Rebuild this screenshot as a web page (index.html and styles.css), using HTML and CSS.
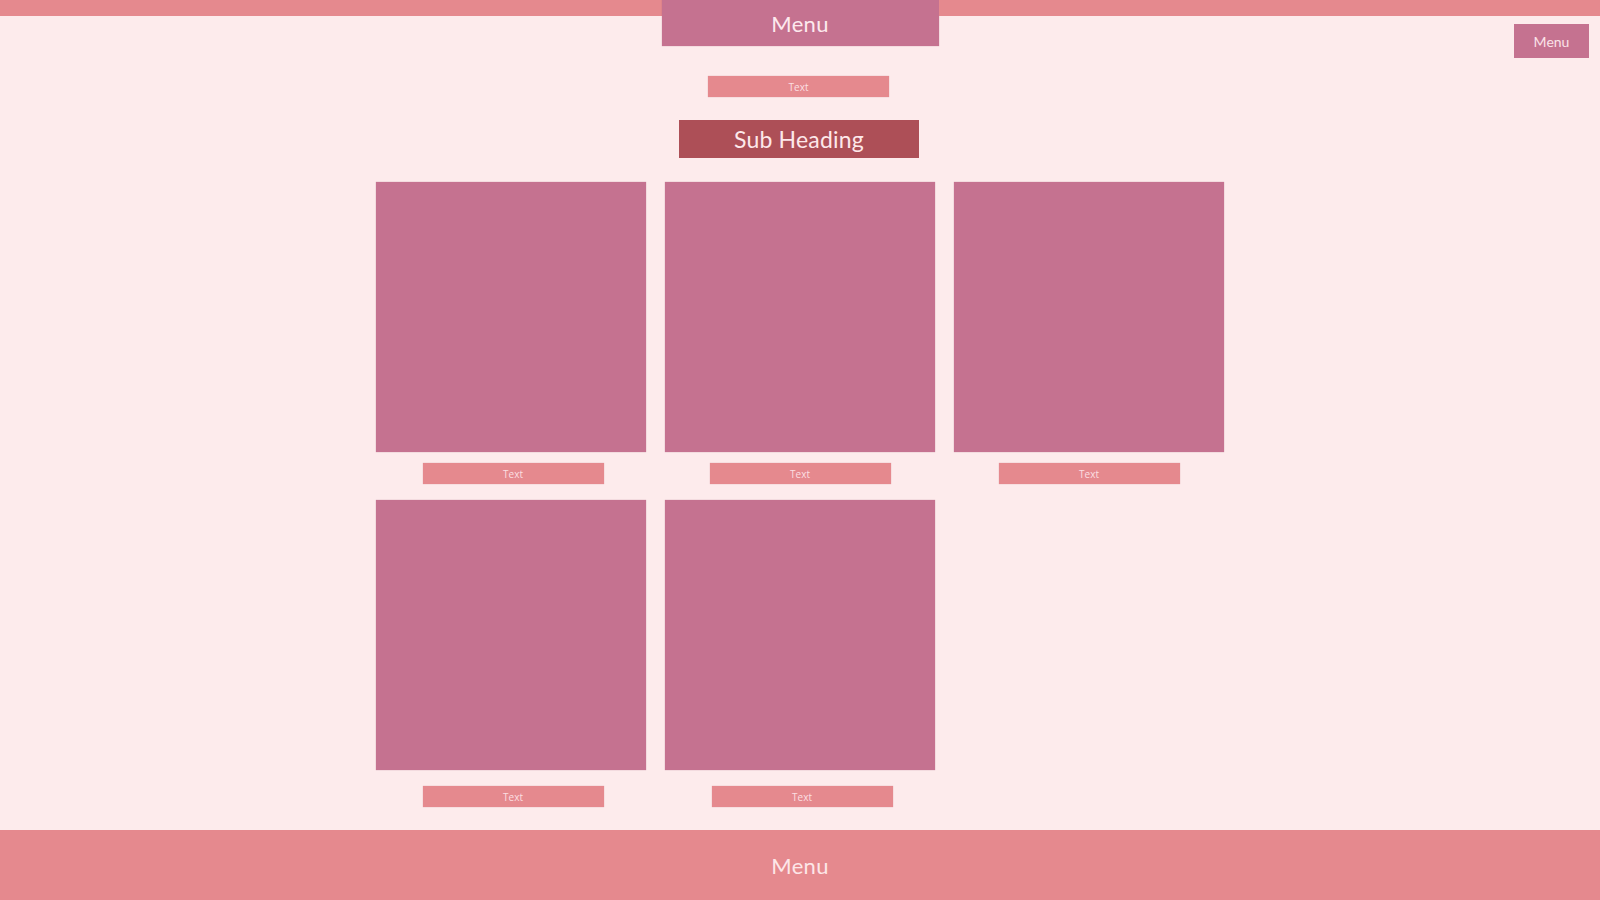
FILE: index.html
```html
<!DOCTYPE html>
<html>
<head>
<meta charset="utf-8">
<link rel="stylesheet" href="styles.css">
</head>
<body>
<header class="header">
  <div class="side">
    <div class="strip"></div>
  </div>
  <div class="menu-main">Menu</div>
  <div class="side side-right">
    <div class="strip"></div>
    <div class="menu-small">Menu</div>
  </div>
</header>
<main class="main">
  <div class="label label-top">Text</div>
  <h2 class="subheading">Sub Heading</h2>
  <div class="grid">
    <div class="item"><div class="card"></div><div class="label label-r1 shift">Text</div></div>
    <div class="item"><div class="card"></div><div class="label label-r1">Text</div></div>
    <div class="item"><div class="card"></div><div class="label label-r1">Text</div></div>
    <div class="item"><div class="card"></div><div class="label label-r2 shift">Text</div></div>
    <div class="item"><div class="card"></div><div class="label label-r2 shift-s">Text</div></div>
  </div>
</main>
<footer class="footer">Menu</footer>
</body>
</html>
```
FILE: styles.css
```css
* { box-sizing: border-box; }
html, body {
  margin: 0;
  padding: 0;
}
body {
  background: #fdebec;
  font-family: "Open Sans", "Noto Sans", sans-serif;
  color: #fde6e8;
  width: 1600px;
  height: 900px;
  display: flex;
  flex-direction: column;
  overflow: hidden;
}
.header {
  display: grid;
  grid-template-columns: 1fr 277px 1fr;
  height: 46px;
}
.side {
  display: flex;
  flex-direction: column;
}
.strip {
  height: 16px;
  background: #e5898e;
  align-self: stretch;
}
.side-right {
  align-items: flex-end;
}
.menu-small {
  margin-top: 8px;
  margin-right: 11px;
  width: 75px;
  height: 34px;
  background: #c57290;
  display: flex;
  align-items: center;
  justify-content: center;
  font-family: "Lato", "Noto Sans", sans-serif;
  font-size: 14px;
  color: #fbe2e8;
}
.menu-main {
  background: #c57290;
  height: 46px;
  display: flex;
  align-items: center;
  justify-content: center;
  font-family: "Lato", "Noto Sans", sans-serif;
  font-size: 22px;
  letter-spacing: 0.3px;
  color: #fde9ee;
  box-shadow: 0 0 1px rgba(160, 80, 110, 0.5);
}
.main {
  display: flex;
  flex-direction: column;
  align-items: center;
  flex: 1;
}
.label {
  width: 181px;
  height: 21px;
  background: #e5898e;
  display: flex;
  align-items: center;
  justify-content: center;
  font-size: 10px;
  color: #fcdfe2;
  box-shadow: 0 0 1px rgba(200, 110, 120, 0.6);
}
.label-top {
  margin-top: 30px;
  margin-left: -3px;
}
.subheading {
  margin: 23px 0 0 -2px;
  width: 240px;
  height: 38px;
  background: #ad4f57;
  display: flex;
  align-items: center;
  justify-content: center;
  font-family: "Lato", "Noto Sans", sans-serif;
  font-weight: 400;
  font-size: 23px;
  color: #fde8ea;
  letter-spacing: 0.2px;
}
.grid {
  margin-top: 24px;
  display: grid;
  grid-template-columns: repeat(3, 270px);
  column-gap: 19px;
  row-gap: 16px;
}
.item {
  display: flex;
  flex-direction: column;
  align-items: center;
}
.card {
  width: 270px;
  height: 270px;
  background: #c57290;
  box-shadow: 0 0 1px rgba(160, 80, 110, 0.6);
}
.label-r1 { margin-top: 11px; }
.label-r2 { margin-top: 16px; }
.shift { margin-left: 4px; }
.shift-s { margin-left: 4px; }
.footer {
  height: 70px;
  flex-shrink: 0;
  background: #e5898e;
  display: flex;
  align-items: center;
  justify-content: center;
  font-family: "Lato", "Noto Sans", sans-serif;
  font-size: 22px;
  color: #fde6e8;
  letter-spacing: 0.3px;
}
```
